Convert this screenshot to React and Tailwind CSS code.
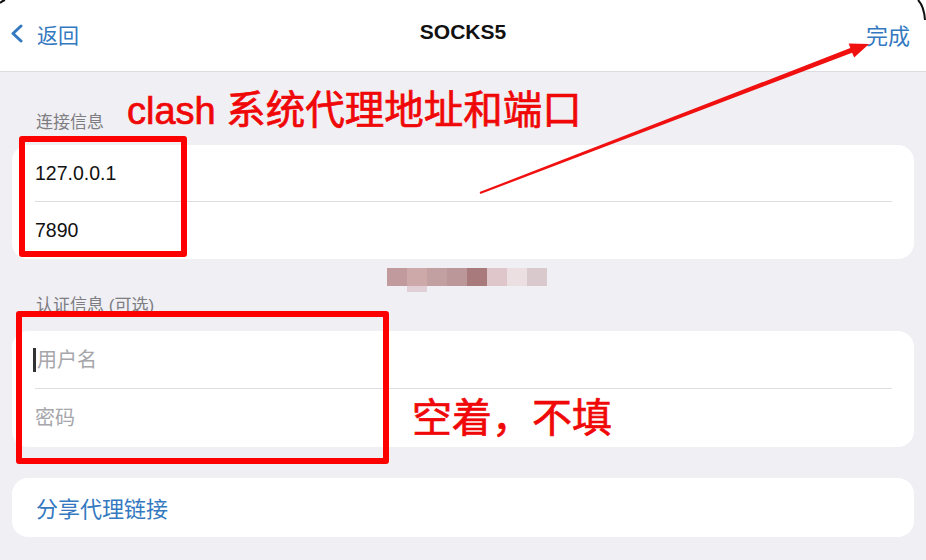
import React from "react";

const mosaic = [
  "#c09a9c",
  "#cda9aa",
  "#c29fa1",
  "#bc9799",
  "#a97a7c",
  "#dfc6ca",
  "#ecdfe2",
  "#d9c8cc",
];

const Row = ({ children, divider, h = "h-[57px]" }) => (
  <div className={`relative ${h} flex items-center pl-[23px] pr-[22px]`}>
    {children}
    {divider && (
      <div className="absolute left-[23px] right-[22px] bottom-0 h-px bg-[#dedee2]" />
    )}
  </div>
);

const Arrow = () => (
  <svg
    className="absolute left-0 top-0 pointer-events-none"
    width="926"
    height="560"
    viewBox="0 0 926 560"
  >
    <polygon
      points="479.6,192.1 850.3,48.1 848.7,43.4 869,44 854.2,57.4 852.1,52.7 480.4,193.9"
      fill="#f01010"
    />
  </svg>
);

export default function App() {
  return (
    <div className="relative w-[926px] h-[560px] overflow-hidden bg-[#efeff4] font-['Liberation_Sans','Noto_Sans_CJK_SC',sans-serif]">
      {/* nav bar */}
      <div className="h-[72px] bg-white border-b border-[#dcdce0] flex items-center justify-between pb-[5px] pl-[9px] pr-[16px]">
        <div className="flex items-center gap-[13px] text-[#3479c0]">
          <svg width="15" height="19" viewBox="0 0 15 19">
            <path
              d="M12 2 L4 9.5 L12 17"
              fill="none"
              stroke="currentColor"
              strokeWidth="3"
              strokeLinecap="round"
              strokeLinejoin="round"
            />
          </svg>
          <span className="text-[21px] font-['Noto_Sans_CJK_SC',sans-serif] leading-none pt-[2px]">
            返回
          </span>
        </div>
        <div className="absolute left-0 right-0 top-[16px] text-center pointer-events-none">
          <span className="text-[21px] font-semibold text-[#111]">SOCKS5</span>
        </div>
        <span className="text-[22px] text-[#3479c0] font-['Noto_Sans_CJK_SC',sans-serif] leading-none pt-[2px]">
          完成
        </span>
      </div>

      <div className="px-[12px]">
        <div className="mt-[39px] mb-[10px] pl-[24px] h-[24px] leading-[24px] text-[17px] text-[#7d7d82]">
          连接信息
        </div>
        <div className="bg-white rounded-[16px] text-[19.5px] text-[#111]">
          <Row divider>127.0.0.1</Row>
          <Row>7890</Row>
        </div>

        <div className="mt-[9px] h-[18px] flex justify-center items-start">
          <div className="flex pl-[7px]">
            {mosaic.map((c, i) => (
              <div key={i} className="flex flex-col">
                <div className="w-[20px] h-[18px]" style={{ backgroundColor: c }} />
                {i === 1 && <div className="w-[20px] h-[6px] bg-[#e0d0d5]" />}
              </div>
            ))}
          </div>
        </div>

        <div className="mt-[8px] mb-[13px] pl-[24px] h-[24px] leading-[24px] text-[17px] text-[#7d7d82]">
          认证信息 (可选)
        </div>
        <div className="bg-white rounded-[16px] text-[20px] text-[#a6a6ab]">
          <Row divider h="h-[58px]">
            <span className="w-[3px] h-[24px] bg-[#333] mr-px -ml-[2px]" />
            用户名
          </Row>
          <Row h="h-[58px]">密码</Row>
        </div>

        <div className="mt-[31px] bg-white rounded-[16px] h-[59px] flex items-center pl-[24px] text-[22px] text-[#3479c0] font-['Noto_Sans_CJK_SC',sans-serif]">
          分享代理链接
        </div>
      </div>

      {/* annotations */}
      <div className="absolute left-[19px] top-[136px] w-[168px] h-[121px] border-[6px] border-[#ff0000] rounded-[3px]" />
      <div className="absolute left-[16px] top-[311px] w-[373px] h-[153px] border-[6px] border-[#ff0000] rounded-[3px]" />
      <div className="absolute left-[127px] top-[83px] text-[38px] leading-[48px] text-[#f00808] whitespace-nowrap [-webkit-text-stroke:0.7px_#f00808]">
        clash <span className="text-[39.5px] font-['Noto_Sans_CJK_SC',sans-serif]">系统代理地址和端口</span>
      </div>
      <div className="absolute left-[412px] top-[391px] text-[40px] leading-[48px] text-[#f00808] whitespace-nowrap font-['Noto_Sans_CJK_SC',sans-serif] [-webkit-text-stroke:0.7px_#f00808]">
        空着，不填
      </div>
      <Arrow />

      {/* device corners */}
      <svg className="absolute right-0 top-0" width="10" height="24" viewBox="0 0 10 24">
        <path d="M2 0 Q8 6 9 20" fill="none" stroke="#111" strokeWidth="2" />
      </svg>
      <svg className="absolute left-0 top-0" width="6" height="5" viewBox="0 0 6 5">
        <path d="M0 3 Q2 1 5 0" fill="none" stroke="#111" strokeWidth="2" />
      </svg>
    </div>
  );
}
